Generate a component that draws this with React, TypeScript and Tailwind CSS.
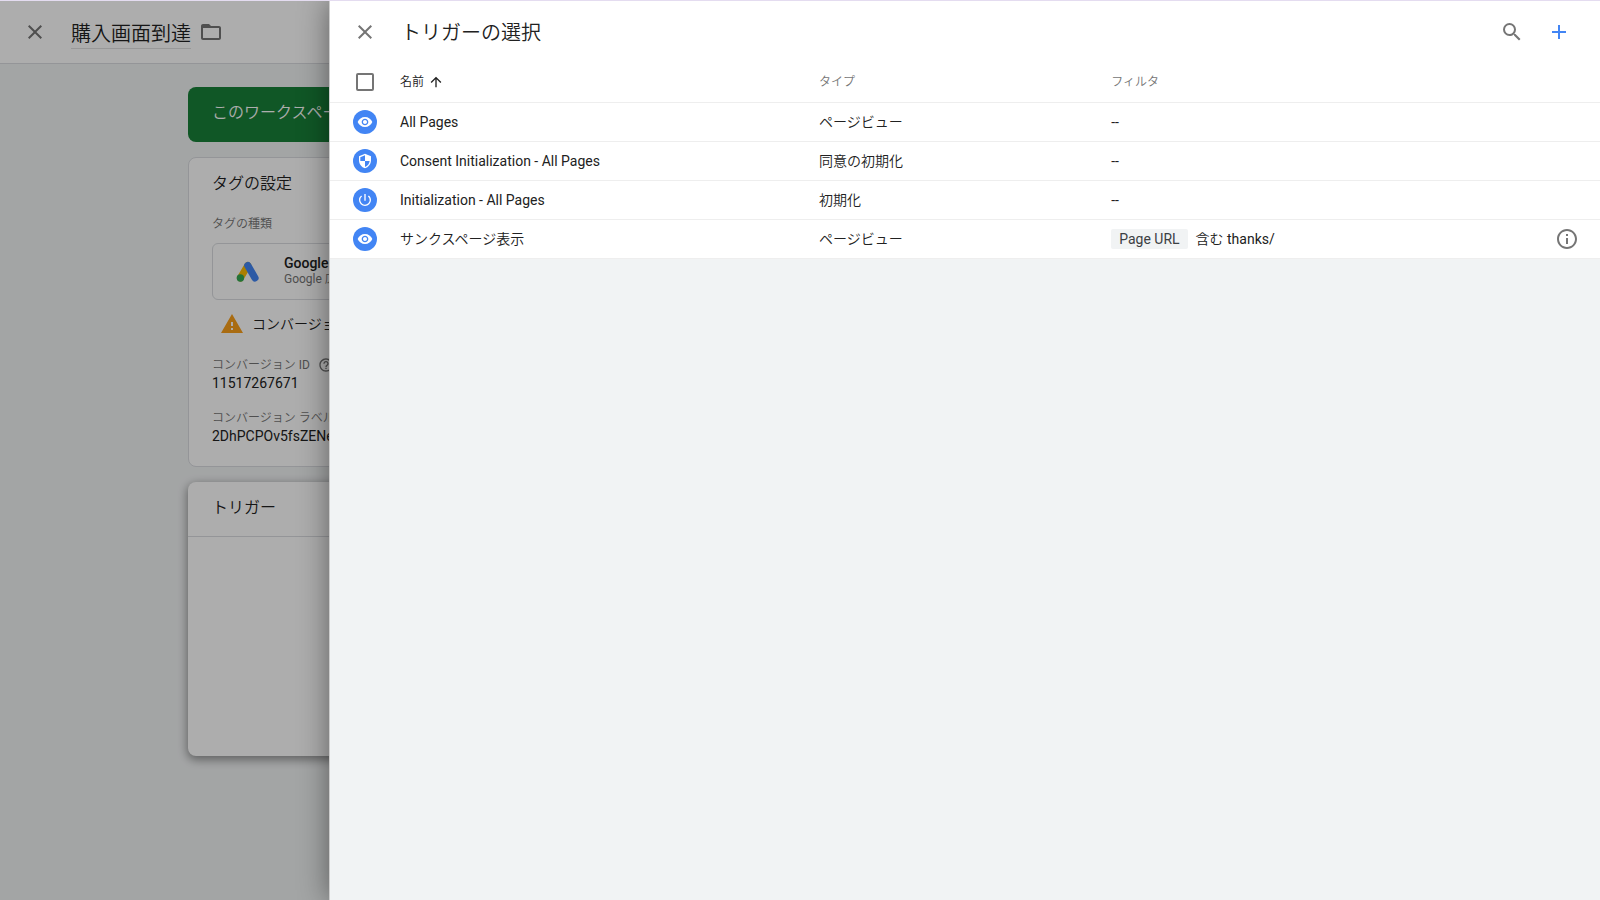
import React from 'react';
import {
  MdAdd,
  MdArrowUpward,
  MdClose,
  MdFolderOpen,
  MdHelpOutline,
  MdInfoOutline,
  MdPowerSettingsNew,
  MdSearch,
  MdSecurity,
  MdVisibility,
  MdWarning,
} from 'react-icons/md';
import type { IconType } from 'react-icons';

interface Trigger {
  name: string;
  type: string;
  icon: IconType;
  filter?: { variable: string; condition: string };
}

const triggers: Trigger[] = [
  { name: 'All Pages', type: 'ページビュー', icon: MdVisibility },
  { name: 'Consent Initialization - All Pages', type: '同意の初期化', icon: MdSecurity },
  { name: 'Initialization - All Pages', type: '初期化', icon: MdPowerSettingsNew },
  {
    name: 'サンクスページ表示',
    type: 'ページビュー',
    icon: MdVisibility,
    filter: { variable: 'Page URL', condition: '含む thanks/' },
  },
];

const AdsLogo = () => (
  <svg viewBox="0 0 24 24" className="w-6 h-6" aria-hidden="true" strokeLinecap="round">
    <path d="M11.8 5.5 4.4 18" stroke="#fbbc04" strokeWidth="7" />
    <path d="M11.8 5.5 19 18" stroke="#4285f4" strokeWidth="7.2" />
    <circle cx="4.4" cy="18" r="3.7" fill="#34a853" />
  </svg>
);

const TagEditor = () => (
  <div className="min-h-screen bg-[#f1f3f4]">
    <header className="flex items-center h-[63px] pl-[23px] bg-white border-b border-[#dadce0]">
      <button aria-label="閉じる" className="text-[#757575]">
        <MdClose className="w-6 h-6" />
      </button>
      <input
        aria-label="タグ名"
        defaultValue="購入画面到達"
        className="w-30 h-[34px] ml-6 pt-0.5 text-xl border-b border-[#e0e0e0] outline-none"
      />
      <button aria-label="フォルダ" className="ml-2 text-[#757575]">
        <MdFolderOpen className="w-6 h-6" />
      </button>
    </header>

    <main className="flex flex-col gap-[15px] px-[188px] pt-[23px] pb-10">
      <div className="pt-3.5 pb-[17px] px-6 rounded-lg bg-[#188038] text-white text-base whitespace-nowrap overflow-hidden">
        このワークスペース
      </div>

      <section className="h-[310px] px-[23px] pt-3.5 bg-white border border-[#dadce0] rounded-lg whitespace-nowrap">
        <h2 className="text-base">タグの設定</h2>
        <p className="mt-5 text-xs leading-4 text-[#757575]">タグの種類</p>
        <div className="flex items-center h-[57px] mt-[11px] pl-[23px] border border-[#dadce0] rounded-md">
          <AdsLogo />
          <div className="ml-6 pb-0.5">
            <div className="text-sm leading-4 font-medium">Google</div>
            <div className="text-xs leading-4 text-[#757575]">Google 広告</div>
          </div>
        </div>
        <div className="flex items-center mt-3 pl-2">
          <MdWarning className="w-6 h-6 text-[#f9a01b]" />
          <span className="ml-2 text-sm">コンバージョン</span>
        </div>
        <dl className="mt-[21px] text-sm leading-5">
          <dt className="flex items-center gap-2 text-xs leading-4 text-[#757575]">
            コンバージョン ID
            <MdHelpOutline className="w-4 h-4" />
          </dt>
          <dd>11517267671</dd>
          <dt className="mt-[17px] text-xs leading-4 text-[#757575]">コンバージョン ラベル</dt>
          <dd>2DhPCPOv5fsZENe</dd>
        </dl>
      </section>

      <section className="h-[274px] bg-white rounded-lg shadow-[0_3px_10px_1px_rgba(0,0,0,0.4)]">
        <h2 className="h-[55px] px-6 pt-3.5 text-base border-b border-[#dadce0]">トリガー</h2>
      </section>
    </main>
  </div>
);

const TriggerTable = () => (
  <table className="w-full table-fixed text-left text-sm bg-white">
    <colgroup>
      <col className="w-[70px]" />
      <col className="w-[33%]" />
      <col className="w-[23%]" />
      <col />
      <col className="w-[68px]" />
    </colgroup>
    <thead className="text-xs text-[#757575]">
      <tr className="h-[39px] border-b border-[#eeeeee]">
        <th className="pl-[26px]">
          <input
            type="checkbox"
            aria-label="すべて選択"
            className="block appearance-none w-[18px] h-[18px] border-2 border-[#757575] rounded-xs"
          />
        </th>
        <th className="font-normal text-[#212121]">
          <button className="flex items-center gap-1">
            名前 <MdArrowUpward className="w-4 h-4" />
          </button>
        </th>
        <th className="font-normal">タイプ</th>
        <th className="font-normal">フィルタ</th>
        <th />
      </tr>
    </thead>
    <tbody>
      {triggers.map(({ name, type, icon: Icon, filter }) => (
        <tr key={name} className="h-[39px] border-b border-[#eeeeee]">
          <td className="pl-[23px]">
            <span className="flex items-center justify-center w-6 h-6 rounded-full bg-[#4285f4] text-white">
              <Icon className="w-4 h-4" />
            </span>
          </td>
          <td>{name}</td>
          <td>{type}</td>
          <td>
            {filter ? (
              <div className="flex items-center gap-2">
                <span className="px-2 rounded-xs bg-[#f1f3f4] text-[#3c4043]">{filter.variable}</span>
                <span>{filter.condition}</span>
              </div>
            ) : (
              '--'
            )}
          </td>
          <td>
            {filter && (
              <button aria-label="詳細" className="block ml-auto mr-[21px] text-[#757575]">
                <MdInfoOutline className="w-6 h-6" />
              </button>
            )}
          </td>
        </tr>
      ))}
    </tbody>
  </table>
);

export default function App() {
  return (
    <div className="relative h-screen overflow-hidden border-t border-[#e4dcf0] font-['Roboto','Noto_Sans_CJK_JP_DemiLight','Noto_Sans_CJK_JP',sans-serif] text-[#212121]">
      <TagEditor />
      <div className="absolute inset-0 bg-black/32" />
      <aside
        role="dialog"
        aria-label="トリガーの選択"
        className="absolute inset-y-0 right-0 left-[329px] bg-[#f1f3f4] border-l border-[#cccccc] shadow-[0_0_28px_rgba(0,0,0,0.45)]"
      >
        <header className="flex items-center h-[62px] pl-[23px] pr-[29px] bg-white">
          <button aria-label="閉じる" className="text-[#757575]">
            <MdClose className="w-6 h-6" />
          </button>
          <h1 className="ml-6 pt-0.5 text-xl">トリガーの選択</h1>
          <button aria-label="検索" className="ml-auto text-[#757575]">
            <MdSearch className="w-6 h-6" />
          </button>
          <button aria-label="追加" className="ml-[23px] text-[#4285f4]">
            <MdAdd className="w-6 h-6" />
          </button>
        </header>
        <TriggerTable />
      </aside>
    </div>
  );
}
